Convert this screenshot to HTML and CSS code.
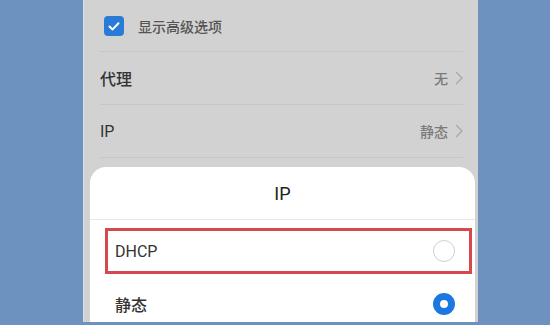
FILE: index.html
```html
<!DOCTYPE html>
<html lang="zh">
<head>
<meta charset="utf-8">
<link rel="stylesheet" href="styles.css">
</head>
<body>
<div class="phone">
  <div class="settings">
    <div class="row row-check">
      <span class="checkbox">
        <svg viewBox="0 0 20 20" width="20" height="20"><path d="M5.5 10.5 L8.6 13.4 L14.5 7.2" fill="none" stroke="#fff" stroke-width="2" stroke-linecap="round" stroke-linejoin="round"/></svg>
      </span>
      <span class="check-label">显示高级选项</span>
    </div>
    <div class="row">
      <span class="label">代理</span>
      <span class="value">无<svg class="chev" viewBox="0 0 8 14" width="8" height="14"><path d="M1 1 L7 7 L1 13" fill="none" stroke="#a8a8a8" stroke-width="1.3"/></svg></span>
    </div>
    <div class="row">
      <span class="label latin">IP</span>
      <span class="value">静态<svg class="chev" viewBox="0 0 8 14" width="8" height="14"><path d="M1 1 L7 7 L1 13" fill="none" stroke="#a8a8a8" stroke-width="1.3"/></svg></span>
    </div>
  </div>
  <div class="sheet">
    <div class="sheet-title">IP</div>
    <div class="option option-marked">
      <span class="opt-label latin">DHCP</span>
      <span class="radio"></span>
    </div>
    <div class="option">
      <span class="opt-label">静态</span>
      <span class="radio radio-on"></span>
    </div>
  </div>
</div>
</body>
</html>
```
FILE: styles.css
```css
html, body {
  margin: 0;
  padding: 0;
}
body {
  width: 550px;
  height: 325px;
  background: #6e92bf;
  font-family: "Roboto", "Noto Sans CJK SC", sans-serif;
  overflow: hidden;
}
.phone {
  margin-left: 83px;
  width: 394px;
  height: 322px;
  background: #d2d2d2;
  border-left: 1px solid #dcdfe3;
  display: flex;
  flex-direction: column;
  overflow: hidden;
}
.settings {
  padding: 0 15px 0 16px;
}
.row {
  height: 52px;
  display: flex;
  align-items: center;
  justify-content: space-between;
  border-bottom: 1px solid #c6c6c6;
}
.row-check {
  justify-content: flex-start;
  height: 50px;
  padding-top: 1px;
}
.checkbox {
  width: 20px;
  height: 20px;
  margin-left: 4px;
  border-radius: 4px;
  background: #2a7bd8;
  display: flex;
}
.check-label {
  margin-left: 14px;
  font-size: 14px;
  font-weight: 500;
  color: #555;
}
.label {
  font-size: 16px;
  font-weight: 500;
  color: #333;
}
.value {
  display: flex;
  align-items: center;
  font-size: 14px;
  font-weight: 500;
  color: #7a7a7a;
}
.chev {
  margin-left: 7px;
}
.sheet {
  margin: 9px 3px 0 6px;
  flex: 1;
  background: #fff;
  border-radius: 16px 16px 0 0;
  overflow: hidden;
}
.sheet-title {
  height: 52px;
  display: flex;
  align-items: center;
  justify-content: center;
  font-size: 18px;
  color: #222;
  border-bottom: 1px solid #e8e8e8;
}
.option {
  height: 56px;
  margin-top: 2px;
  display: flex;
  align-items: center;
  justify-content: space-between;
  padding: 0 20px 0 25px;
}
.option-marked {
  height: 40px;
  margin: 8px 3px 0 15px;
  padding: 0 14px 0 7px;
  border: 3px solid #d8474b;
}
.opt-label {
  font-size: 16px;
  font-weight: 500;
  color: #333;
}
.latin {
  font-weight: 400;
}
.radio {
  width: 20px;
  height: 20px;
  border-radius: 50%;
  border: 1px solid #cfcfcf;
}
.radio-on {
  width: 8px;
  height: 8px;
  border: 7px solid #1a78e0;
}
```
